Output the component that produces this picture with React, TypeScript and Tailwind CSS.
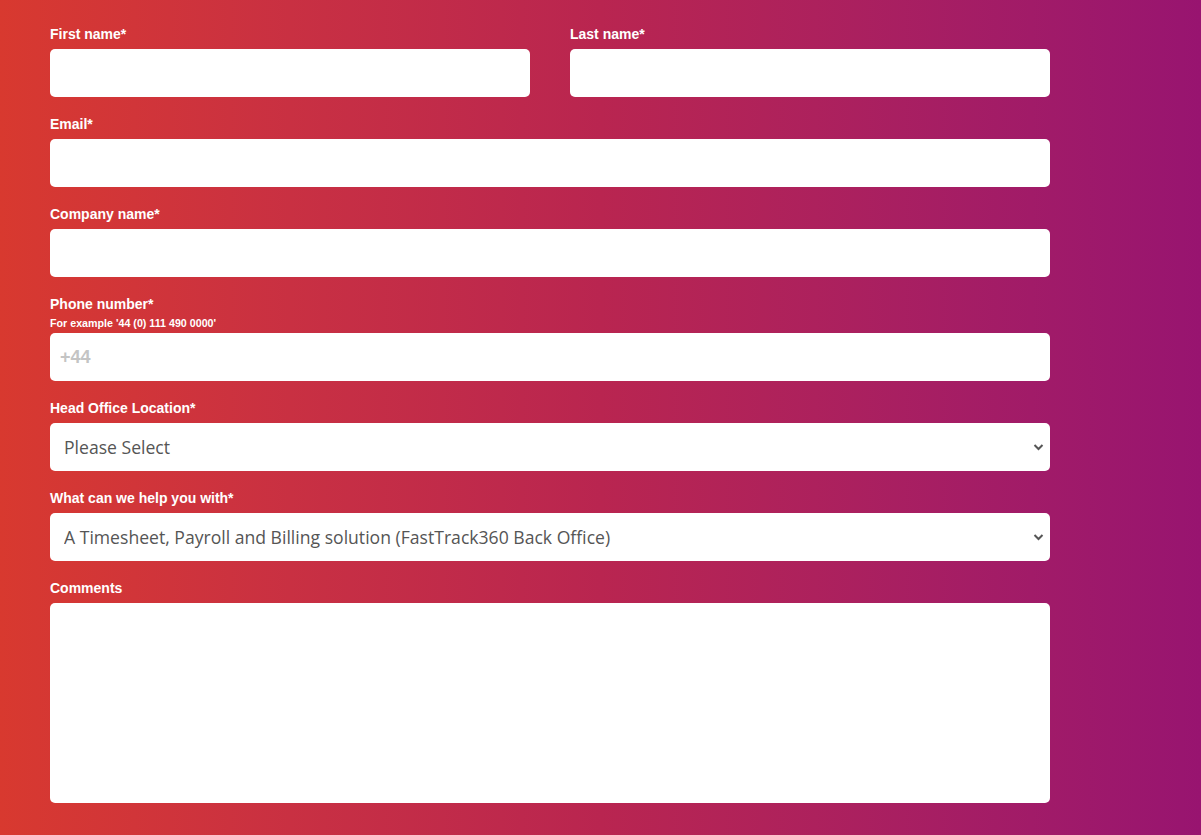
import React from 'react';

const labelCls = "block text-[14px] leading-5 font-bold text-white mb-[5px] font-['Liberation_Sans',Arial,sans-serif]";
const inputCls = "block w-full h-12 rounded-[5px] bg-white px-[13px] text-[16px] text-[#555] outline-none border-0 font-['Liberation_Sans',Arial,sans-serif]";
const phoneCls = "block w-full h-12 rounded-[5px] bg-white px-[10px] text-[18px] text-[#555] outline-none border-0 placeholder:text-[#c4c4c4] placeholder:font-bold font-['Liberation_Sans',Arial,sans-serif]";
const selectCls = "block w-full h-12 rounded-[5px] bg-white pl-[14px] pr-10 text-[17.6px] text-[#555] outline-none border-0 appearance-none font-['Open_Sans',sans-serif]";

const Chevron = () => (
    <svg
        className="absolute right-[6px] top-1/2 -translate-y-1/2 pointer-events-none"
        width="11"
        height="8"
        viewBox="0 0 11 8"
        fill="none"
    >
        <path d="M1.5 2L5.5 6L9.5 2" stroke="#555" strokeWidth="2" />
    </svg>
);

export default function App() {
    return (
        <div className="w-full min-h-[835px] bg-gradient-to-r from-[#d8392f] via-[#b92550] to-[#981470] pt-[24px] pl-[50px]">
            <form className="w-[1000px]" onSubmit={(e) => e.preventDefault()}>
                {/* Name row */}
                <div className="grid grid-cols-2 gap-10 mb-[17px]">
                    <div>
                        <label className={labelCls}>First name*</label>
                        <input type="text" className={inputCls} />
                    </div>
                    <div>
                        <label className={labelCls}>Last name*</label>
                        <input type="text" className={inputCls} />
                    </div>
                </div>

                <div className="mb-[17px]">
                    <label className={labelCls}>Email*</label>
                    <input type="email" className={inputCls} />
                </div>

                <div className="mb-[17px]">
                    <label className={labelCls}>Company name*</label>
                    <input type="text" className={inputCls} />
                </div>

                <div className="mb-[17px]">
                    <label className={labelCls + " !mb-[3px]"}>Phone number*</label>
                    <p className="text-[10.7px] leading-3 font-bold text-white mb-1 font-['Liberation_Sans',Arial,sans-serif]">
                        For example '44 (0) 111 490 0000'
                    </p>
                    <input type="tel" placeholder="+44" className={phoneCls} />
                </div>

                <div className="mb-[17px]">
                    <label className={labelCls}>Head Office Location*</label>
                    <div className="relative">
                        <select className={selectCls} defaultValue="">
                            <option value="">Please Select</option>
                            <option>United Kingdom</option>
                            <option>Australia</option>
                            <option>United States</option>
                        </select>
                        <Chevron />
                    </div>
                </div>

                <div className="mb-[17px]">
                    <label className={labelCls}>What can we help you with*</label>
                    <div className="relative">
                        <select className={selectCls} defaultValue="bo">
                            <option value="bo">A Timesheet, Payroll and Billing solution (FastTrack360 Back Office)</option>
                            <option value="fo">A Recruitment CRM (FastTrack360 Front Office)</option>
                        </select>
                        <Chevron />
                    </div>
                </div>

                <div>
                    <label className={labelCls}>Comments</label>
                    <textarea className="block w-full h-[200px] rounded-[5px] bg-white p-3 text-[16px] text-[#555] outline-none border-0 resize-none font-['Liberation_Sans',Arial,sans-serif]" />
                </div>
            </form>
        </div>
    );
}
